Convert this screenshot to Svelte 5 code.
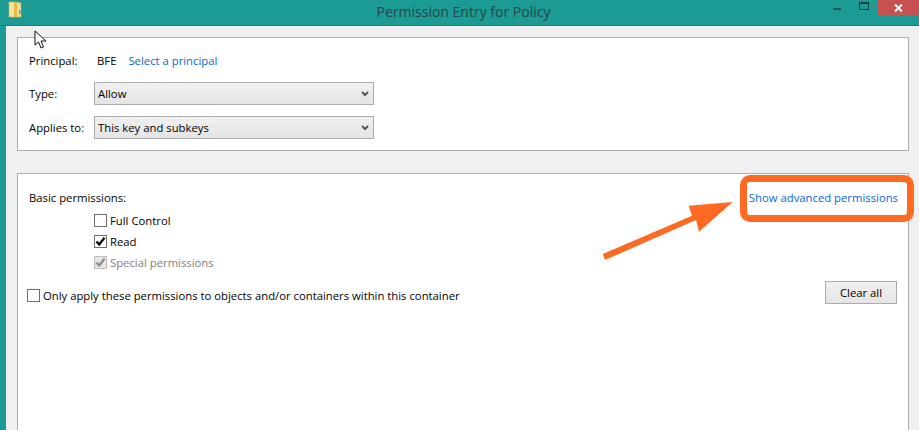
<script>
	const basic = [
		{ label: 'Full Control', state: 'off' },
		{ label: 'Read', state: 'on' },
		{ label: 'Special permissions', state: 'disabled' }
	];
</script>

<div class="window">
	<header class="titlebar">
		<svg class="folder" width="14" height="18" viewBox="0 0 14 18">
			<path d="M1 2 L8 2 L8 17 L1 17 Z" fill="#f6e49a" stroke="#cfb565" stroke-width="0.6" />
			<path d="M8 2 L13 3 L13 17 L8 17 Z" fill="#f3dc8a" stroke="#cfb565" stroke-width="0.6" />
			<path d="M6 2 L9 2 L9 17 L6 17 Z" fill="#e3bc4c" />
			<rect x="11" y="10" width="1.5" height="4" fill="#5c9fd0" />
		</svg>
		<h1 class="title">Permission Entry for Policy</h1>
		<div class="controls">
			<span class="min"></span>
			<span class="max"></span>
			<span class="close">
				<svg width="9" height="8" viewBox="0 0 9 8">
					<path d="M1 0.5 L8 7.5 M8 0.5 L1 7.5" stroke="#fff" stroke-width="2" fill="none" />
				</svg>
			</span>
		</div>
	</header>

	<main class="body">
		<section class="panel top">
			<div class="row principal">
				<span class="label">Principal:</span>
				<span class="value">BFE</span>
				<span class="link">Select a principal</span>
			</div>
			<div class="row">
				<span class="label">Type:</span>
				<div class="select">
					<span>Allow</span>
					<svg class="chev" width="8" height="6" viewBox="0 0 8 6">
						<path d="M1 1 L4 4 L7 1" stroke="#555" stroke-width="2" fill="none" />
					</svg>
				</div>
			</div>
			<div class="row">
				<span class="label">Applies to:</span>
				<div class="select">
					<span>This key and subkeys</span>
					<svg class="chev" width="8" height="6" viewBox="0 0 8 6">
						<path d="M1 1 L4 4 L7 1" stroke="#555" stroke-width="2" fill="none" />
					</svg>
				</div>
			</div>
		</section>

		<section class="panel bottom">
			<div class="head">
				<span>Basic permissions:</span>
				<span class="link advanced">Show advanced permissions</span>
			</div>
			<ul class="perms">
				{#each basic as item}
					<li class:muted={item.state === 'disabled'}>
						<span class="check {item.state}">
							{#if item.state !== 'off'}
								<svg width="11" height="11" viewBox="0 0 11 11">
									<path d="M1.5 5.5 L4.2 8.5 L9.5 1.8" stroke="currentColor" stroke-width="2.2" fill="none" />
								</svg>
							{/if}
						</span>
						{item.label}
					</li>
				{/each}
			</ul>
			<div class="only">
				<div class="only-label">
					<span class="check off"></span>
					Only apply these permissions to objects and/or containers within this container
				</div>
				<button class="clear">Clear all</button>
			</div>
		</section>
	</main>

	<!-- annotation drawn over the screenshot -->
	<div class="highlight"></div>
	<svg class="arrow" width="140" height="70" viewBox="0 0 140 70">
		<path d="M2.7 54 L5 60 L96 20 L99 31.7 L132.7 2 L88.7 5.7 L92 15.7 Z" fill="#ff6a22" />
	</svg>
	<svg class="cursor" width="13" height="20" viewBox="0 0 13 20">
		<path d="M1 1 L1 15 L4.5 12 L7 18 L9.5 17 L7 11 L12 11 Z" fill="#fff" stroke="#111" stroke-width="1" />
	</svg>
</div>

<style>
	:global(body) {
		margin: 0;
		overflow: hidden;
	}

	.window {
		position: relative;
		width: 919px;
		height: 430px;
		overflow: hidden;
		background: #1c9a94;
		font-family: 'Open Sans', 'Liberation Sans', sans-serif;
		font-size: 11.3px;
		color: #000;
	}

	.titlebar {
		position: relative;
		height: 25px;
		border-bottom: 1px solid #14807b;
	}

	.folder {
		position: absolute;
		left: 8px;
		top: 0;
	}

	.title {
		margin: 0;
		padding-left: 8px;
		text-align: center;
		font-size: 14px;
		font-weight: 400;
		line-height: 23px;
		color: #1f4a4a;
	}

	.controls {
		position: absolute;
		right: 0;
		top: 0;
		display: flex;
		align-items: flex-start;
	}

	.min {
		width: 8px;
		height: 2px;
		margin: 8px 18px 0 0;
		background: #1f5a57;
	}

	.max {
		width: 8px;
		height: 5px;
		margin: 2px 8px 0 0;
		border: 1px solid #1c3c3c;
		border-top-width: 2px;
	}

	.close {
		display: flex;
		align-items: center;
		justify-content: center;
		width: 42px;
		height: 16px;
		background: #c75050;
	}

	.body {
		margin-left: 6px;
		height: 404px;
		padding: 11px 10px 0 11px;
		background: #f0f0f0;
		box-sizing: border-box;
	}

	.panel {
		border: 1px solid #acacac;
		background: #fff;
	}

	.top {
		height: 114px;
		padding: 8px 35px 0 11px;
		box-sizing: border-box;
		margin-bottom: 22px;
	}

	.row {
		display: flex;
		align-items: center;
		height: 23px;
		margin-bottom: 11px;
	}

	.principal {
		height: 28px;
		margin-bottom: 8px;
	}

	.label {
		width: 65px;
		flex: none;
	}

	.value {
		margin: 0 12px 0 3px;
	}

	.link {
		color: #0a66d8;
	}

	.advanced {
		margin-right: -1px;
	}

	.select {
		display: flex;
		align-items: center;
		justify-content: space-between;
		width: 280px;
		height: 23px;
		padding: 0 4px 0 3px;
		border: 1px solid #acacac;
		box-sizing: border-box;
		background: linear-gradient(#f0f0f0, #e5e5e5);
	}

	.bottom {
		height: 300px;
		padding: 15px 11px 0 11px;
	}

	.head {
		display: flex;
		justify-content: space-between;
		line-height: 17px;
	}

	.perms {
		list-style: none;
		margin: 4px 0 0;
		padding: 0 0 0 65px;
	}

	.perms li {
		display: flex;
		align-items: center;
		gap: 3px;
		height: 21px;
	}

	.muted {
		color: #808080;
	}

	.check {
		display: flex;
		align-items: center;
		justify-content: center;
		width: 11px;
		height: 11px;
		border: 1px solid #707070;
		background: #fff;
		color: #000;
		flex: none;
	}

	.check.disabled {
		border-color: #bcbcbc;
		background: #e6e6e6;
		color: #8a8a8a;
	}

	.only {
		display: flex;
		justify-content: space-between;
		align-items: flex-start;
		margin: 12px 0 0 -2px;
	}

	.only-label {
		display: flex;
		align-items: center;
		gap: 3px;
		height: 21px;
	}

	.clear {
		width: 72px;
		height: 23px;
		margin: -4px 0 0;
		padding: 0;
		border: 1px solid #acacac;
		background: linear-gradient(#f0f0f0, #e5e5e5);
		font: inherit;
		color: #000;
	}

	.highlight {
		position: absolute;
		left: 740px;
		top: 175px;
		width: 174px;
		height: 47px;
		border: 7px solid #ff6a22;
		border-radius: 10px;
		box-sizing: border-box;
	}

	.arrow {
		position: absolute;
		left: 600px;
		top: 200px;
	}

	.cursor {
		position: absolute;
		left: 34px;
		top: 30px;
	}
</style>
